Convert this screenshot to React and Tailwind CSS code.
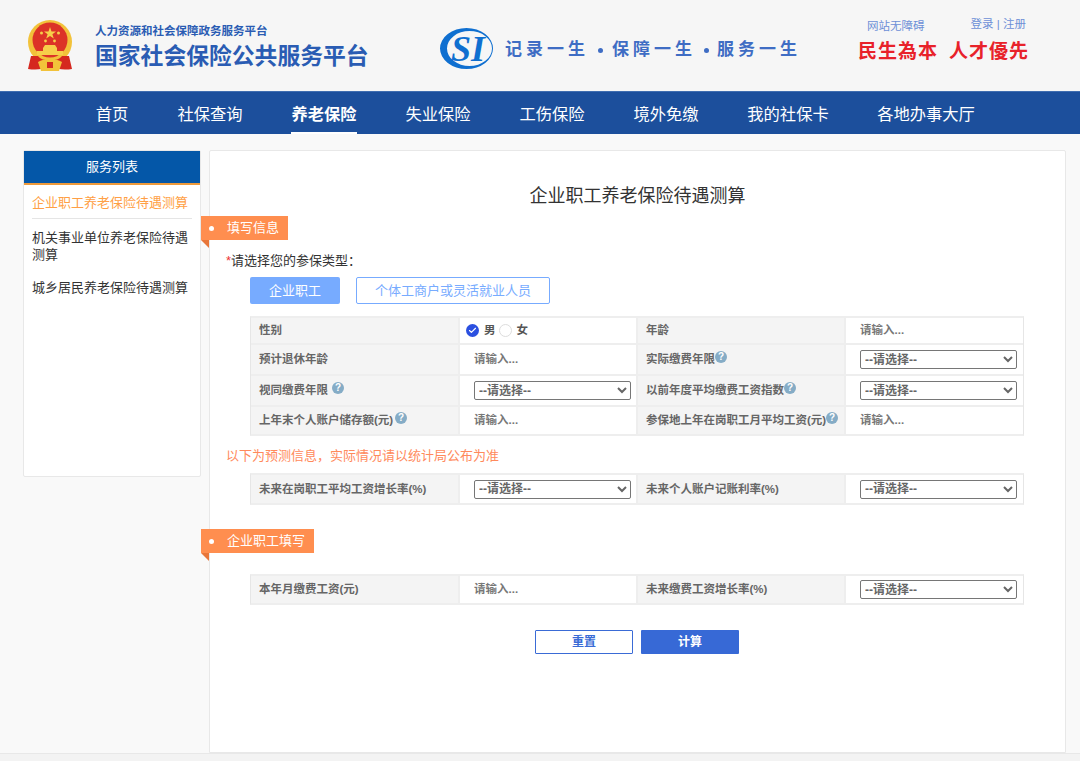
import { Check } from "lucide-react";

const FONT = "font-['Liberation_Sans','Noto_Sans_CJK_SC',sans-serif]";
const NAV = [
  { label: "首页", w: "w-[34px]" },
  { label: "社保查询", w: "w-[66px]" },
  { label: "养老保险", w: "w-[66px]", active: true },
  { label: "失业保险", w: "w-[66px]" },
  { label: "工伤保险", w: "w-[66px]" },
  { label: "境外免缴", w: "w-[66px]" },
  { label: "我的社保卡", w: "w-[82px]" },
  { label: "各地办事大厅", w: "w-[98px]" },
];

function Emblem() {
  return (
    <svg width="46" height="52" viewBox="0 0 46 52">
      <circle cx="23" cy="22" r="22" fill="#f2c23a" />
      <circle cx="23" cy="20" r="17.5" fill="#dc3327" />
      <polygon points="23,7 24.5,11.5 29,11.5 25.4,14.2 26.8,18.6 23,16 19.2,18.6 20.6,14.2 17,11.5 21.5,11.5" fill="#f6cf4a" />
      <circle cx="14.5" cy="13" r="1.5" fill="#f6cf4a" />
      <circle cx="31.5" cy="13" r="1.5" fill="#f6cf4a" />
      <circle cx="18.5" cy="21" r="1.4" fill="#f6cf4a" />
      <circle cx="27.5" cy="21" r="1.4" fill="#f6cf4a" />
      <path d="M16 28 L18 25 H28 L30 28 V32 H16 Z" fill="#f6cf4a" />
      <rect x="10" y="31" width="26" height="4" fill="#f6cf4a" />
      <path d="M4 36 H11 C15 42 31 42 35 36 H42 L45 49 C38 50 31 50 23 46 C15 50 8 50 1 49 Z" fill="#d5281f" />
      <path d="M11 42 C17 38 29 38 35 42 L32 51 H14 Z" fill="#f2c23a" />
      <rect x="20" y="42" width="6" height="6" fill="#d5281f" />
    </svg>
  );
}

function SiLogo() {
  return (
    <svg width="53" height="41" viewBox="0 0 53 41">
      <path
        fillRule="evenodd"
        d="M0 20.5 A26.5 20.5 0 1 1 53 20.5 A26.5 20.5 0 1 1 0 20.5 Z M7 20.5 A22.5 17.5 0 1 0 52 20.5 A22.5 17.5 0 1 0 7 20.5 Z"
        fill="#0f6fd0"
      />
      <text x="11" y="33" fontFamily="Liberation Serif" fontStyle="italic" fontWeight="700" fontSize="36" fill="#0f6fd0">SI</text>
    </svg>
  );
}

function Help({ className = "ml-[2px]" }) {
  return (
    <span className={`inline-flex w-[12px] h-[12px] rounded-full bg-[#85acc6] text-white text-[10px] font-bold items-center justify-center leading-none -translate-y-[3px] shrink-0 ${className}`}>?</span>
  );
}

function Badge({ children }) {
  return (
    <div className="relative -ml-[9px] w-fit">
      <div className="h-[24px] bg-[#ff8e4f] text-white text-[13px] flex items-center pl-[8px] pr-[9px] gap-[13px]">
        <span className="w-[5px] h-[5px] rounded-full bg-white" />
        {children}
      </div>
      <div className="absolute left-0 -bottom-[8px] w-0 h-0 border-t-[8px] border-t-[#e8763a] border-l-[8px] border-l-transparent" />
    </div>
  );
}

function Label({ children, help }) {
  return (
    <div className="bg-[#f4f4f4] h-full flex items-center pl-[8px] pt-px text-[11.5px] font-bold text-[#666] whitespace-nowrap">
      {children}
      {help}
    </div>
  );
}

function Input() {
  return (
    <div className="h-full flex items-center pl-[14px] pt-px">
      <input placeholder="请输入..." className="w-[150px] outline-none text-[11.5px] font-bold placeholder:text-[#777]" />
    </div>
  );
}

function Select() {
  return (
    <div className="h-full flex items-center pl-[14px]">
      <select className="w-[157px] h-[19px] border border-[#767676] rounded-[2px] bg-white text-[12px] font-bold text-[#666]">
        <option>--请选择--</option>
      </select>
    </div>
  );
}

function Row({ cells, h, last }) {
  return (
    <div className={`grid grid-cols-[209px_178px_208px_1fr] ${h} ${last ? "" : "border-b-2 border-[#eee]"}`}>
      {cells.map((c, i) => (
        <div key={i} className={i < 3 ? "border-r-2 border-[#eee] min-w-0" : "min-w-0"}>{c}</div>
      ))}
    </div>
  );
}

function Table({ className, children }) {
  return (
    <div className={`ml-[40px] w-[774px] border border-[#e6e6e6] border-t-2 border-b-2 border-t-[#eee] border-b-[#eee] ${className}`}>
      {children}
    </div>
  );
}

export default function App() {
  return (
    <div className={`${FONT} w-[1080px] h-[761px] overflow-hidden bg-[#f9f9f9] flex flex-col`}>
      {/* Header */}
      <header className="h-[91px] shrink-0 bg-[#f6f6f6] flex items-center pl-[27px]">
        <Emblem />
        <div className="ml-[22px] mt-[4px] w-[273px] text-[#2a5cb3] whitespace-nowrap">
          <div className="text-[11.5px] font-bold leading-[14px]">人力资源和社会保障政务服务平台</div>
          <div className="text-[22.8px] font-bold leading-[30px] mt-[3px]">国家社会保险公共服务平台</div>
        </div>
        <div className="ml-[72px] mt-[6px]"><SiLogo /></div>
        <div className="ml-[12px] mt-[9px] flex items-center text-[17px] font-bold text-[#3f6dc4] tracking-[4px] whitespace-nowrap">
          <span>记录一生</span>
          <span className="w-[23px] flex justify-center"><span className="w-[5px] h-[5px] rounded-full bg-[#3f6dc4]" /></span>
          <span>保障一生</span>
          <span className="w-[21px] flex justify-center"><span className="w-[5px] h-[5px] rounded-full bg-[#3f6dc4]" /></span>
          <span>服务一生</span>
        </div>
        <div className="ml-auto mr-[52px] w-[170px] self-start mt-[16px]">
          <div className="h-[18px] flex items-start text-[11.5px] leading-[16px] text-[#6d8fd6] whitespace-nowrap">
            <span className="ml-[9px] mt-[2px]">网站无障碍</span>
            <span className="ml-[46px]">登录 | 注册</span>
          </div>
          <div className="flex text-[#e8222a] text-[19px] font-bold tracking-[1px] whitespace-nowrap leading-[26px] mt-[5px] gap-[11px]">
            <span>民生為本</span>
            <span>人才優先</span>
          </div>
        </div>
      </header>

      {/* Nav */}
      <nav className="h-[43px] shrink-0 bg-[#1c4f9c] flex items-center pl-[95px] gap-[48px] border-t border-[#3f6db0]">
        {NAV.map(n => (
          <div key={n.label} className={`${n.w} h-full flex items-center justify-center pt-[2px] whitespace-nowrap text-[16.3px] text-white relative ${n.active ? "font-bold" : ""}`}>
            {n.label}
            {n.active && <span className="absolute left-0 right-0 bottom-0 h-[2px] bg-white" />}
          </div>
        ))}
      </nav>

      {/* Body */}
      <div className="h-[619px] shrink-0 flex items-start pl-[23px] pt-[16px] gap-[8px]">
        <aside className="w-[178px] h-[327px] bg-white border border-[#e8e8e8] rounded-[2px]">
          <div className="h-[34px] bg-[#0457a8] border-b-2 border-[#ee9a3b] text-white text-[13px] flex items-center justify-center">服务列表</div>
          <div className="px-[8px] text-[13px] leading-[17px] text-[#333]">
            <div className="text-[#ff9f45] pt-[9px] pb-[7px] border-b border-[#e5e5e5]">企业职工养老保险待遇测算</div>
            <div className="pt-[10px]">机关事业单位养老保险待遇测算</div>
            <div className="pt-[16px]">城乡居民养老保险待遇测算</div>
          </div>
        </aside>

        <main className="w-[857px] h-[603px] bg-white border border-[#e8e8e8] rounded-t-[2px]">
          <h1 className="text-[18px] text-[#333] text-center pt-[33px] leading-[24px]">企业职工养老保险待遇测算</h1>
          <div className="mt-[8px]"><Badge>填写信息</Badge></div>
          <div className="mt-[13px] ml-[16px] text-[13px] text-[#333] leading-[16px]"><span className="text-[#e33]">*</span>请选择您的参保类型：</div>
          <div className="ml-[40px] mt-[8px] flex gap-[16px]">
            <button className="w-[90px] h-[27px] bg-[#77abff] rounded-[2px] text-white text-[13px]">企业职工</button>
            <button className="w-[194px] h-[27px] border border-[#77abff] rounded-[2px] text-[#77abff] text-[13px]">个体工商户或灵活就业人员</button>
          </div>

          <Table className="mt-[12px]">
            <Row h="h-[27px]" cells={[
              <Label>性别</Label>,
              <div className="h-full flex items-center pl-[6px] text-[11.5px] font-bold text-[#555]">
                <span className="w-[13px] h-[13px] rounded-full bg-[#2b50e0] flex items-center justify-center"><Check size={9} strokeWidth={3} className="text-white" /></span>
                <span className="ml-[5px]">男</span>
                <span className="ml-[3px] w-[13px] h-[13px] rounded-full border border-[#ddd]" />
                <span className="ml-[5px]">女</span>
              </div>,
              <Label>年龄</Label>,
              <Input />,
            ]} />
            <Row h="h-[31px]" cells={[
              <Label>预计退休年龄</Label>,
              <Input />,
              <Label help={<Help className="" />}>实际缴费年限</Label>,
              <Select />,
            ]} />
            <Row h="h-[31px]" cells={[
              <Label help={<Help className="ml-[4px]" />}>视同缴费年限</Label>,
              <Select />,
              <Label help={<Help className="" />}>以前年度平均缴费工资指数</Label>,
              <Select />,
            ]} />
            <Row h="h-[27px]" last cells={[
              <Label help={<Help />}>上年末个人账户储存额(元)</Label>,
              <Input />,
              <Label help={<Help className="" />}>参保地上年在岗职工月平均工资(元)</Label>,
              <Input />,
            ]} />
          </Table>

          <div className="ml-[16px] mt-[11px] text-[13px] leading-[18px] text-[#ff8a5c]">以下为预测信息，实际情况请以统计局公布为准</div>

          <Table className="mt-[8px]">
            <Row h="h-[28px]" last cells={[
              <Label>未来在岗职工平均工资增长率(%)</Label>,
              <Select />,
              <Label>未来个人账户记账利率(%)</Label>,
              <Select />,
            ]} />
          </Table>

          <div className="mt-[24px]"><Badge>企业职工填写</Badge></div>

          <Table className="mt-[21px]">
            <Row h="h-[27px]" last cells={[
              <Label>本年月缴费工资(元)</Label>,
              <Input />,
              <Label>未来缴费工资增长率(%)</Label>,
              <Select />,
            ]} />
          </Table>

          <div className="mt-[25px] ml-[325px] flex gap-[8px]">
            <button className="w-[98px] h-[24px] border border-[#3a6bd6] rounded-[1px] text-[#3a6bd6] text-[12px] font-bold">重置</button>
            <button className="w-[98px] h-[24px] bg-[#3769d6] rounded-[1px] text-white text-[12px] font-bold">计算</button>
          </div>
        </main>
      </div>

      <footer className="flex-1 bg-[#f3f3f3] border-t border-[#e8e8e8]" />
    </div>
  );
}
